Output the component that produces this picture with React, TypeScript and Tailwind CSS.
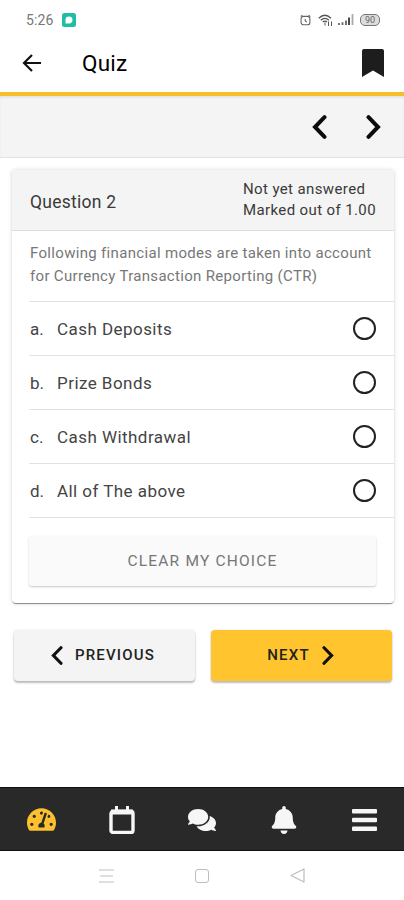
import { FaBell, FaComments, FaTachometerAlt } from "react-icons/fa";

const choices = [
  { letter: "a.", label: "Cash Deposits" },
  { letter: "b.", label: "Prize Bonds" },
  { letter: "c.", label: "Cash Withdrawal" },
  { letter: "d.", label: "All of The above" },
];

function Chevron({ dir, className }: { dir: "left" | "right"; className: string }) {
  return (
    <svg viewBox="0 0 15 24" className={className} fill="none" stroke="currentColor" strokeWidth="4" strokeLinecap="round">
      {dir === "left" ? <path d="M12.5 2.2 3 12l9.5 9.8" /> : <path d="M2.5 2.2 12 12l-9.5 9.8" />}
    </svg>
  );
}

function StatusBar() {
  return (
    <div className="flex h-10 items-center pr-[24px] pl-[26px] text-[#777]">
      <span className="text-[14px] leading-none tracking-[0.1px]">5:26</span>
      <svg viewBox="0 0 14 14" className="ml-[9px] size-[14px]">
        <rect width="14" height="14" rx="2.5" fill="#20bda5" />
        <path d="M3.5 10.5V6.8a3.5 3.5 0 1 1 3.5 3.7z" fill="#fff" />
      </svg>
      <div className="ml-auto flex items-center">
        <svg viewBox="0 0 12 12" className="h-3 w-[11px]" fill="none" stroke="#666" strokeWidth="1.2">
          <rect x="1.2" y="2" width="9.6" height="9.2" rx="2.6" />
          <path d="M.8 2.4 2.6.7M11.2 2.4 9.4.7M5.7 4.8v2.3l1.8 1" />
        </svg>
        <svg viewBox="0 0 15 13" className="ml-[7px] h-[13px] w-[15px]" fill="none" stroke="#555" strokeWidth="1.3">
          <path d="M.8 4.2Q6.8-1.6 13 4.2M2.8 6.2Q6.8 2.6 11 6.2M4.8 8Q7 6.3 9 8" />
          <path d="M7 8.5v3M10.5 7.5V12M13.5 7.5V12" strokeWidth="1" />
        </svg>
        <svg viewBox="0 0 16 12" className="ml-[5px] h-3 w-4" stroke="#666" strokeWidth="1.8">
          <path d="M1 9v2M4.5 8.3V11M8 6.5V11" />
          <path d="M11 3.5V11" stroke="#333" />
          <path d="M14.5 0v11" stroke="#aaa" />
        </svg>
        <span className="ml-[6px] flex h-[12px] w-[20px] items-center justify-center rounded-[5px] border border-[#777] bg-[#ddd] text-[9px] leading-none text-[#666]">
          90
        </span>
      </div>
    </div>
  );
}

function Header() {
  return (
    <header className="flex h-[56px] items-center border-b-[4px] border-[#f5bf2b] pr-[20px] pb-[6px] pl-[22px]">
      <svg viewBox="0 0 20 18" className="h-[18px] w-5" fill="none" stroke="#111" strokeWidth="2.2">
        <path d="M19 9H2M10 1 2 9l8 8" />
      </svg>
      <h1 className="ml-10 text-[22.5px] font-[450] leading-none tracking-[0.2px] text-black">Quiz</h1>
      <svg viewBox="0 0 22 28" className="ml-auto h-7 w-[22px]">
        <path d="M2 0h18a2 2 0 0 1 2 2v26l-11-6.5L0 28V2a2 2 0 0 1 2-2z" fill="#1d1d1d" />
      </svg>
    </header>
  );
}

function QuestionCard() {
  return (
    <section className="mx-3 mt-3 h-[433px] w-[382px] rounded-[4px] bg-white shadow-[0_2px_1px_-1px_rgba(0,0,0,0.3),0_1px_1px_rgba(0,0,0,0.18),0_0_4px_rgba(0,0,0,0.16)]">
      <div className="flex h-[61px] items-center justify-between rounded-t-[4px] border-b border-[#dedede] bg-[#f4f4f4] pr-[18px] pl-[18px] text-[#3a3a3a]">
        <h2 className="pt-[5px] text-[17.5px] leading-none tracking-[0.25px]">Question 2</h2>
        <p className="w-[133px] text-[15px] leading-[21px] whitespace-nowrap tracking-[0.38px]">
          Not yet answered
          <br />
          Marked out of 1.00
        </p>
      </div>
      <div className="pl-[17px]">
        <p className="h-[71px] border-b border-[#e2e2e2] pt-[11px] pl-px text-[15px] leading-[23px] whitespace-nowrap tracking-[0.32px] text-[#777]">
          Following financial modes are taken into account
          <br />
          for Currency Transaction Reporting (CTR)
        </p>
        {choices.map((c) => (
          <label key={c.letter} className="flex h-[54px] items-center border-b border-[#e2e2e2] pr-[18px] text-[17px] text-[#444]">
            <span className="w-7 pt-[2px] pl-px">{c.letter}</span>
            <span className="pt-[2px] tracking-[0.45px]">{c.label}</span>
            <span className="ml-auto size-[23px] rounded-full border-2 border-[#222]" />
          </label>
        ))}
        <button className="mt-[18px] flex h-[50px] w-[347px] items-center justify-center rounded-[3px] bg-[#fafafa] pt-px text-[15.5px] tracking-[1.2px] text-[#777] shadow-[0_1px_2px_rgba(0,0,0,0.22)]">
          CLEAR MY CHOICE
        </button>
      </div>
    </section>
  );
}

function TabBar() {
  return (
    <nav className="grid h-[64px] grid-cols-5 items-center justify-items-center border-y border-[#111] bg-[#292929] pt-px pl-px text-white">
      <FaTachometerAlt className="size-[29px] text-[#fdc02f]" />
      <svg viewBox="0 0 26 28" className="h-7 w-[26px]" fill="none" stroke="#f6f6f6">
        <rect x="2" y="5.5" width="22" height="21" rx="2" strokeWidth="3.4" />
        <path d="M2 6h22" strokeWidth="5" />
        <path d="M7.5 0v5M18.5 0v5" strokeWidth="3" />
      </svg>
      <FaComments className="size-[28px] text-[#f6f6f6]" />
      <FaBell className="ml-px size-[28px] text-[#f6f6f6]" />
      <svg viewBox="0 0 25 22" className="ml-px h-[22px] w-[25px]" fill="#f6f6f6">
        <rect width="25" height="4.4" rx="1" />
        <rect y="8.8" width="25" height="4.4" rx="1" />
        <rect y="17.6" width="25" height="4.4" rx="1" />
      </svg>
    </nav>
  );
}

export default function App() {
  return (
    <div className="flex h-[900px] w-[404px] flex-col overflow-hidden bg-white font-[Roboto,'Liberation_Sans',sans-serif]">
      <StatusBar />
      <Header />
      <div className="flex h-[62px] items-center justify-end gap-[39px] border-b border-[#e2e2e2] bg-[#f4f4f4] pr-[23px] text-[#0b0b0b] shadow-[inset_0_2px_2px_rgba(0,0,0,0.06)]">
        <Chevron dir="left" className="h-6 w-[15px]" />
        <Chevron dir="right" className="h-6 w-[15px]" />
      </div>
      <QuestionCard />
      <div className="mt-[27px] flex gap-[15.5px] pl-[14px] text-[15px] font-medium text-[#222]">
        <button className="flex h-[51px] w-[181px] items-center justify-center rounded-[4px] bg-[#f4f4f4] pr-[3px] shadow-[0_2px_2px_rgba(0,0,0,0.25),0_0_2px_rgba(0,0,0,0.12)]">
          <Chevron dir="left" className="mr-[12px] h-[19px] w-[12px] text-[#111]" />
          <span className="tracking-[1.2px]">PREVIOUS</span>
        </button>
        <button className="flex h-[51px] w-[181px] items-center justify-center rounded-[4px] bg-[#ffc42e] pr-px shadow-[0_2px_2px_rgba(0,0,0,0.25),0_0_2px_rgba(0,0,0,0.12)]">
          <span className="tracking-[1.2px]">NEXT</span>
          <Chevron dir="right" className="ml-[12px] h-[19px] w-[12px] text-[#111]" />
        </button>
      </div>
      <div className="mt-auto">
        <TabBar />
        <div className="flex h-[49px] items-center justify-center gap-[81px]">
          <svg viewBox="0 0 15 14" className="h-[14px] w-[15px]" stroke="#d5d5d5" strokeWidth="1.6">
            <path d="M0 1h15M1 7h13M0 13h15" />
          </svg>
          <span className="size-[14px] rounded-[3px] border border-[#bdbdbd]" />
          <svg viewBox="0 0 15 15" className="size-[15px]" fill="none" stroke="#bdbdbd" strokeWidth="1.2" strokeLinejoin="round">
            <path d="M14 1v13L1 7.5z" />
          </svg>
        </div>
      </div>
    </div>
  );
}
